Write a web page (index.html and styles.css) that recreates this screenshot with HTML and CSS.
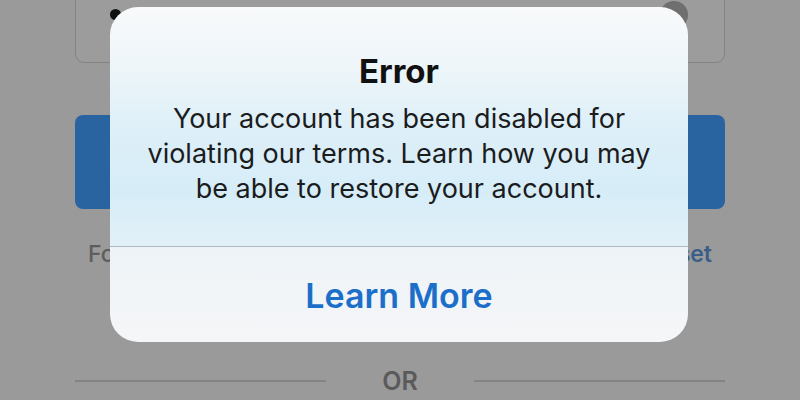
FILE: index.html
```html
<!DOCTYPE html>
<html lang="en">
<head>
<meta charset="utf-8">
<title>Error</title>
<link rel="stylesheet" href="styles.css">
</head>
<body>
<div class="screen">
  <div class="login">
    <div class="field">
      <span class="dot"></span>
      <span class="clear"></span>
    </div>
    <div class="submit"></div>
    <div class="help">
      <span class="help-text">Forgot your login details?</span>
      <span class="help-link">Reset</span>
    </div>
    <div class="divider">
      <span class="rule"></span>
      <span class="or">OR</span>
      <span class="rule"></span>
    </div>
  </div>

  <div class="alert" role="alertdialog">
    <div class="alert-body">
      <h1 class="alert-title">Error</h1>
      <p class="alert-message">Your account has been disabled for<br>violating our terms. Learn how you may<br>be able to restore your account.</p>
    </div>
    <div class="alert-actions">
      <span class="alert-button">Learn More</span>
    </div>
  </div>
</div>
</body>
</html>
```

FILE: styles.css
```css
html, body {
  margin: 0;
  padding: 0;
}

body {
  width: 800px;
  height: 400px;
  overflow: hidden;
  background: #9a9a9a;
  font-family: Inter, "Noto Sans", "Liberation Sans", sans-serif;
}

.screen {
  position: relative;
  width: 800px;
  height: 400px;
}

.login {
  display: flex;
  flex-direction: column;
  padding: 0 75px;
}

.field {
  position: relative;
  margin-top: -20px;
  height: 81px;
  border: 1px solid #848484;
  border-radius: 9px;
  background: #9c9c9c;
}

.dot {
  position: absolute;
  left: 34px;
  top: 28px;
  width: 11px;
  height: 11px;
  border-radius: 50%;
  background: #111;
}

.clear {
  position: absolute;
  right: 36px;
  top: 20px;
  width: 28px;
  height: 28px;
  border-radius: 50%;
  background: #6f6f6f;
}

.submit {
  margin-top: 52px;
  height: 94px;
  border-radius: 8px;
  background: #2a64a0;
}

.help {
  display: flex;
  justify-content: space-between;
  align-items: center;
  margin-top: 30px;
  padding: 0 13px;
  height: 30px;
  font-size: 23px;
  font-weight: 500;
}

.help-text {
  color: #5d5d5d;
}

.help-link {
  color: #3b5e89;
  font-weight: 600;
}

.divider {
  display: flex;
  align-items: center;
  margin-top: 97px;
  height: 30px;
}

.rule {
  flex: 1;
  height: 2px;
  background: #838383;
}

.or {
  width: 148px;
  text-align: center;
  font-size: 25px;
  font-weight: 600;
  color: #5a5a5a;
}

.alert {
  position: absolute;
  left: 110px;
  top: 7px;
  width: 578px;
  height: 335px;
  border-radius: 28px;
  overflow: hidden;
  display: flex;
  flex-direction: column;
}

.alert-body {
  height: 240px;
  box-sizing: border-box;
  padding-top: 44px;
  text-align: center;
  background: linear-gradient(180deg, #f8fafb 0%, #eff6f9 22%, #ddeff8 52%, #d6edf8 78%, #e2f0f7 100%);
  border-bottom: 1px solid #aeb9c0;
}

.alert-title {
  margin: 0;
  font-size: 33px;
  line-height: 40px;
  font-weight: 700;
  color: #111;
}

.alert-message {
  margin: 10px 0 0;
  font-size: 27px;
  line-height: 35px;
  font-weight: 400;
  color: #1b1c1d;
}

.alert-actions {
  flex: 1;
  display: flex;
  align-items: center;
  justify-content: center;
  background: linear-gradient(180deg, #edf3f7 0%, #f2f5f8 60%, #f5f6f8 100%);
}

.alert-button {
  font-size: 34px;
  font-weight: 600;
  color: #1c6fc9;
  margin-top: 2px;
}
```
